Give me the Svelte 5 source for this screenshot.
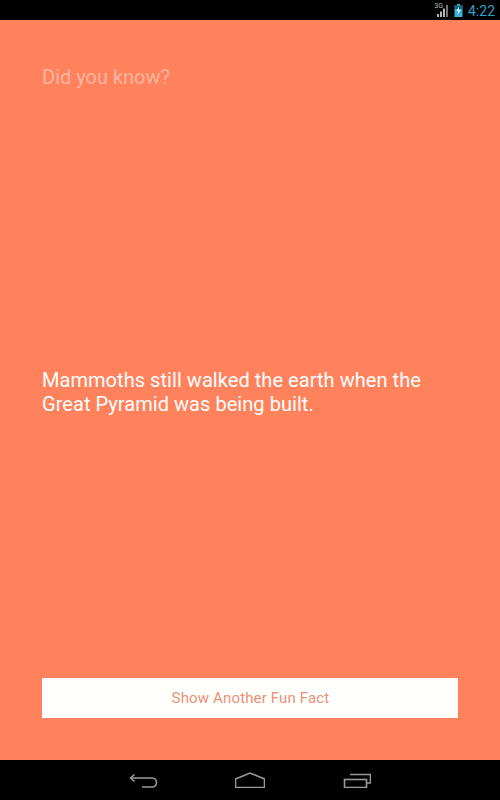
<script lang="ts">
  let fact = 'Mammoths still walked the earth when the Great Pyramid was being built.'
</script>

<div class="screen">
  <div class="status">
    <span class="net">3G</span>
    <svg class="signal" width="11" height="12" viewBox="0 0 11 12">
      <rect x="0" y="9" width="2" height="3" fill="#b5b5b5" />
      <rect x="3" y="6.5" width="2" height="5.5" fill="#b5b5b5" />
      <rect x="6" y="3.5" width="2" height="8.5" fill="#b5b5b5" />
      <rect x="9" y="0" width="2" height="12" fill="#777" />
    </svg>
    <svg class="battery" width="9" height="13" viewBox="0 0 9 13">
      <path d="M3 0H6V1.5H8.5V13H.5V1.5H3Z" fill="#35b4d8" />
      <path d="M.5 1.5H8.5V5H.5Z" fill="#1d5f78" />
      <path d="M5 2.5 2.5 7H4.2L3.6 11 6.5 6H4.8Z" fill="#e8f6fb" />
    </svg>
    <span class="clock">4:22</span>
  </div>

  <main>
    <p class="intro">Did you know?</p>
    <p class="fact">{fact}</p>
    <button>Show Another Fun Fact</button>
  </main>

  <nav>
    <svg width="30" height="16" viewBox="0 0 30 16" fill="none" stroke="#9a9a9a" stroke-width="1.6">
      <path d="M2 6H23C29 6 29 15 23 15H13" />
      <path d="M5.5 2.5 1.5 6 5.5 9.5" />
    </svg>
    <svg width="30" height="16" viewBox="0 0 30 16" fill="none" stroke="#9a9a9a" stroke-width="1.6">
      <path d="M.5 7 15 1 29.5 7V15.5H.5Z" />
    </svg>
    <svg width="30" height="16" viewBox="0 0 30 16" fill="none" stroke="#9a9a9a" stroke-width="1.6">
      <rect x="3.5" y="7.5" width="22" height="8" />
      <path d="M9 2.5H29.5V11H26" />
    </svg>
  </nav>
</div>

<style>
  :global(body) {
    margin: 0;
    font-family: Roboto, 'Liberation Sans', sans-serif;
  }
  .screen {
    display: flex;
    flex-direction: column;
    width: 500px;
    height: 800px;
    background: #ff825c;
  }
  .status {
    display: flex;
    align-items: center;
    justify-content: flex-end;
    flex: none;
    height: 20px;
    padding-right: 5px;
    background: #000;
    box-sizing: border-box;
  }
  .net {
    align-self: flex-start;
    margin: 2px -6px 0 0;
    color: #bbb;
    font-size: 7px;
  }
  .signal {
    margin-top: 1px;
  }
  .battery {
    margin-left: 6px;
  }
  .clock {
    margin: 1px 0 0 5px;
    color: #2f9fc8;
    font-size: 14px;
  }
  main {
    flex: 1;
    display: flex;
    flex-direction: column;
    padding: 46px 42px 42px;
    min-height: 0;
  }
  .intro {
    margin: 0;
    color: #fff;
    opacity: 0.4;
    font-size: 20px;
    line-height: 22px;
  }
  .fact {
    margin: auto 0;
    padding-top: 17px;
    color: #fff;
    font-size: 20px;
    line-height: 24px;
    letter-spacing: 0.05px;
  }
  button {
    flex: none;
    height: 40px;
    border: 0;
    border-radius: 0;
    padding: 0 0 0 1px;
    background: #fffffc;
    color: #ec8f78;
    font-family: inherit;
    font-size: 15px;
    letter-spacing: 0.15px;
  }
  nav {
    flex: none;
    display: flex;
    align-items: center;
    justify-content: center;
    gap: 76px;
    height: 40px;
    background: #000;
  }
</style>
